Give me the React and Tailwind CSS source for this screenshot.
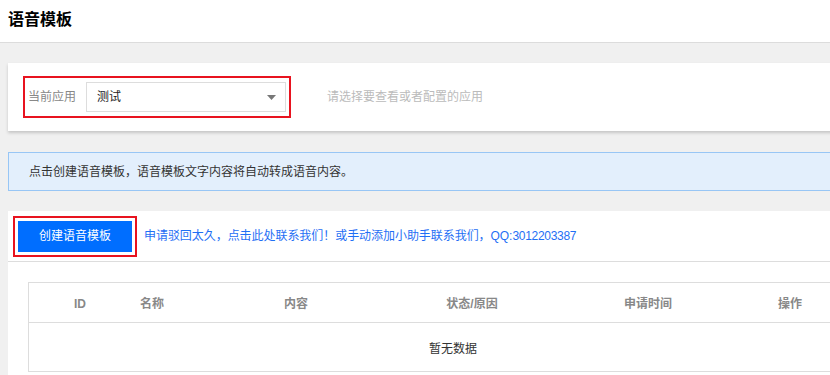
const cols = [
    { label: 'ID', w: 'w-[102px]' },
    { label: '名称', w: 'w-[42px]' },
    { label: '内容', w: 'w-[246px]' },
    { label: '状态/原因', w: 'w-[106px]' },
    { label: '申请时间', w: 'w-[246px]' },
    { label: '操作', w: 'w-[38px]' },
];

const App = () => {
    return (
        <div className="w-full h-[375px] overflow-hidden bg-[#f0f0f0] font-['Liberation_Sans','Noto_Sans_CJK_SC',sans-serif] text-[12px] text-[#333]">
            {/* Header */}
            <header className="h-[43px] bg-white border-b border-[#dcdcdc] flex items-center px-2 pb-[3px]">
                <h1 className="text-[16px] font-bold text-black leading-none">语音模板</h1>
            </header>

            <main className="w-[890px] ml-2 pt-5 flex flex-col">
                {/* App selector */}
                <div className="h-[68px] bg-white shadow-[0_2px_3px_rgba(0,0,0,0.18)] flex items-center pl-[15px]">
                    <div className="h-[42px] w-[268px] border-2 border-[#e8131f] flex items-center pl-[3px] pr-[3px]">
                        <span className="text-[#888] w-[58px]">当前应用</span>
                        <div className="w-[200px] h-[30px] border border-[#dddddd] flex items-center justify-between pl-[10px] pr-[9px]">
                            <span className="text-[#222]">测试</span>
                            <svg width="9" height="5" viewBox="0 0 9 5"><path d="M0 0h9L4.5 5z" fill="#777" /></svg>
                        </div>
                    </div>
                    <span className="ml-[36px] text-[#bbb]">请选择要查看或者配置的应用</span>
                </div>

                {/* Info */}
                <div className="mt-[21px] h-[39px] bg-[#e3effc] border border-[#98c6f5] flex items-center pl-5 text-[#333]">
                    点击创建语音模板，语音模板文字内容将自动转成语音内容。
                </div>

                {/* List */}
                <div className="mt-5 bg-white h-[200px]">
                    <div className="h-[51px] border-b border-[#dddddd] flex items-center pl-[5px]">
                        <div className="border-2 border-[#e8131f] p-[3px]">
                            <button className="w-[114px] h-[31px] bg-[#006eff] text-white">创建语音模板</button>
                        </div>
                        <a className="ml-[7px] text-[#1f6ff5] tracking-[-0.05px]">申请驳回太久，点击此处联系我们！或手动添加小助手联系我们，QQ:<span className="tracking-[-0.3px]">3012203387</span></a>
                    </div>

                    <div className="mx-5 mt-5 border border-[#dddddd]">
                        <div className="h-[40px] flex items-center border-b border-[#dddddd] pt-[2px]">
                            {cols.map((c) => (
                                <div key={c.label} className={`${c.w} text-center font-bold text-[#888]`}>{c.label}</div>
                            ))}
                        </div>
                        <div className="h-[48px] flex items-center justify-center pt-[3px] text-[#333]">暂无数据</div>
                    </div>
                </div>
            </main>
        </div>
    );
};

export default App;
